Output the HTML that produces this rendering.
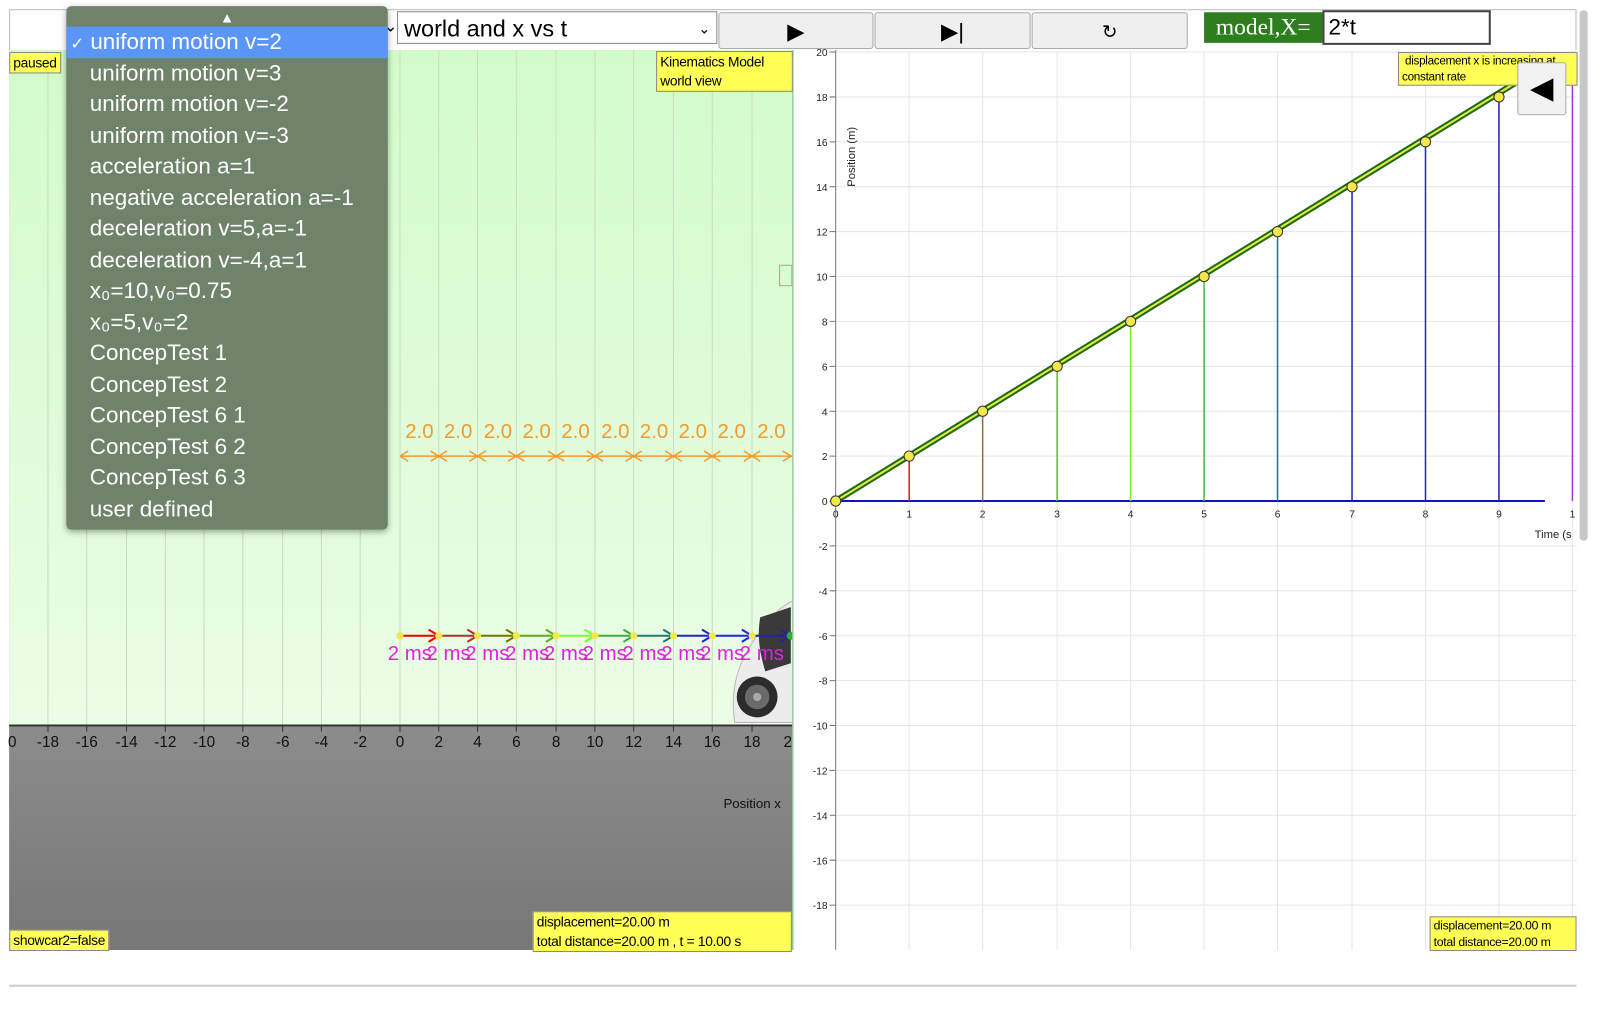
<!DOCTYPE html>
<html><head><meta charset="utf-8"><style>
body{margin:0;width:1600px;height:1000px;background:#fff;position:relative;overflow:hidden;font-family:"Liberation Sans",sans-serif}
#w{position:absolute;left:0;top:0;width:1568px;height:980px;transform:scale(1.0204);transform-origin:0 0}
.a{position:absolute}
.btn{position:absolute;top:12px;height:36px;background:#efefef;border:1px solid #aaa;border-radius:3px;box-sizing:border-box;text-align:center;font-size:22px;line-height:36px}
.y{position:absolute;background:#ffff55;border:1px solid #888;font-size:13.5px;letter-spacing:-0.3px;line-height:19px;padding:0 3px;color:#000;white-space:nowrap}
.menu{position:absolute;left:65px;top:6px;width:315px;height:513px;background:#6f836a;border-radius:5px;box-shadow:0 2px 6px rgba(0,0,0,.35)}
.menu div{height:30.5px;line-height:30px;font-size:22px;color:#fff;padding-left:23px}
</style></head><body><div id="w">
<div class="a" style="left:9px;top:9px;width:1536px;height:922px;border:1px solid #bbb;box-sizing:border-box"></div>
<div class="a" style="left:389px;top:11px;width:314px;height:32px;border:1px solid #888;font-size:23px;line-height:32px;padding-left:6px;box-sizing:border-box">world and x vs t<span style="position:absolute;right:6px;font-size:14px">&#8964;</span></div>
<div class="a" style="left:376px;top:16px;font-size:16px">&#8964;</div>
<div class="btn" style="left:704px;width:152px">&#9654;</div>
<div class="btn" style="left:857px;width:153px">&#9654;|</div>
<div class="btn" style="left:1011px;width:153px;font-size:18px">&#8635;</div>
<div class="a" style="left:1180px;top:12px;width:116px;height:30px;background:#2e7d1e;color:#fff;font-family:'Liberation Serif',serif;font-size:23px;line-height:30px;text-align:center">model,X=</div>
<div class="a" style="left:1296px;top:10px;width:165px;height:34px;border:2px solid #444;box-sizing:border-box;font-size:22px;line-height:30px;padding-left:4px">2*t</div>
<div class="a" style="left:1548px;top:10px;width:8px;height:520px;background:#c8c8c8;border-radius:4px"></div>
<svg class="a" style="left:0;top:0" width="1600" height="1000">
<defs><linearGradient id="gg" x1="0" y1="0" x2="0" y2="1"><stop offset="0" stop-color="#d2fbca"/><stop offset="1" stop-color="#ebfde6"/></linearGradient>
<linearGradient id="gr" x1="0" y1="0" x2="0" y2="1"><stop offset="0" stop-color="#8c8c8c"/><stop offset="1" stop-color="#777"/></linearGradient></defs>
<rect x="9" y="49" width="768" height="662" fill="url(#gg)"/>
<rect x="9" y="711" width="768" height="220" fill="url(#gr)"/>
<g stroke="#c9dcc4" stroke-width="1">
<path d="M47 49V711M85 49V711M124 49V711M162 49V711M200 49V711M238 49V711M277 49V711M315 49V711M353 49V711M392 49V711M430 49V711M468 49V711M506 49V711M545 49V711M583 49V711M621 49V711M660 49V711M698 49V711M737 49V711"/></g>
<line x1="9" y1="711" x2="777" y2="711" stroke="#333" stroke-width="2"/>
<g stroke="#333"><path d="M47 711v6M85 711v6M124 711v6M162 711v6M200 711v6M238 711v6M277 711v6M315 711v6M353 711v6M392 711v6M430 711v6M468 711v6M506 711v6M545 711v6M583 711v6M621 711v6M660 711v6M698 711v6M737 711v6"/></g>
<g font-size="15" text-anchor="middle" fill="#111">
<text x="12" y="732">0</text><text x="47" y="732">-18</text><text x="85" y="732">-16</text><text x="124" y="732">-14</text><text x="162" y="732">-12</text><text x="200" y="732">-10</text><text x="238" y="732">-8</text><text x="277" y="732">-6</text><text x="315" y="732">-4</text><text x="353" y="732">-2</text><text x="392" y="732">0</text><text x="430" y="732">2</text><text x="468" y="732">4</text><text x="506" y="732">6</text><text x="545" y="732">8</text><text x="583" y="732">10</text><text x="621" y="732">12</text><text x="660" y="732">14</text><text x="698" y="732">16</text><text x="737" y="732">18</text><text x="772" y="732">2</text></g>
<text x="709" y="792" font-size="13" fill="#111">Position x</text>
<g fill="#f39a2a" font-size="20" text-anchor="middle"><text x="411" y="429">2.0</text><text x="449" y="429">2.0</text><text x="488" y="429">2.0</text><text x="526" y="429">2.0</text><text x="564" y="429">2.0</text><text x="603" y="429">2.0</text><text x="641" y="429">2.0</text><text x="679" y="429">2.0</text><text x="717" y="429">2.0</text><text x="756" y="429">2.0</text></g>
<path d="M392 447H777M392 447l8-5M392 447l8 5M422 442l16 10M422 452l16-10M460 442l16 10M460 452l16-10M498 442l16 10M498 452l16-10M537 442l16 10M537 452l16-10M575 442l16 10M575 452l16-10M613 442l16 10M613 452l16-10M652 442l16 10M652 452l16-10M690 442l16 10M690 452l16-10M729 442l16 10M729 452l16-10M767 442l10 6M767 452l10-6" stroke="#f39a2a" stroke-width="1.5" fill="none"/>
<path d="M720 708c-6-40 8-70 30-95c8-12 18-20 27-24v119z" fill="#ececec" stroke="#bbb"/>
<path d="M745 605l30-10v55l-25 8c-6-20-8-35-5-53z" fill="#3a3a3a"/>
<circle cx="742" cy="683" r="20" fill="#2c2c2c"/><circle cx="742" cy="683" r="12" fill="#6a6a6a"/><circle cx="742" cy="683" r="4" fill="#aaa"/>
<g stroke-width="2" fill="none">
<path d="M392 623H430M420 617l10 6-10 6" stroke="#e00"/>
<path d="M430 623H468M458 617l10 6-10 6" stroke="#a33"/>
<path d="M468 623H506M496 617l10 6-10 6" stroke="#770"/>
<path d="M506 623H545M535 617l10 6-10 6" stroke="#6a2"/>
<path d="M545 623H583M573 617l10 6-10 6" stroke="#7f3"/>
<path d="M583 623H621M611 617l10 6-10 6" stroke="#4a4"/>
<path d="M621 623H660M650 617l10 6-10 6" stroke="#277"/>
<path d="M660 623H698M688 617l10 6-10 6" stroke="#22c"/>
<path d="M698 623H737M727 617l10 6-10 6" stroke="#22e"/>
<path d="M737 623H775M765 617l10 6-10 6" stroke="#22a"/></g>
<g fill="#f2e84a"><circle cx="392" cy="623" r="3.5"/><circle cx="430" cy="623" r="3.5"/><circle cx="468" cy="623" r="3.5"/><circle cx="506" cy="623" r="3.5"/><circle cx="545" cy="623" r="3.5"/><circle cx="583" cy="623" r="3.5"/><circle cx="621" cy="623" r="3.5"/><circle cx="660" cy="623" r="3.5"/><circle cx="698" cy="623" r="3.5"/><circle cx="737" cy="623" r="3.5"/></g>
<circle cx="775" cy="623" r="4" fill="#3a3"/>
<g fill="#e020e0" font-size="20"><text x="380" y="647">2 ms</text><text x="418" y="647">2 ms</text><text x="456" y="647">2 ms</text><text x="495" y="647">2 ms</text><text x="533" y="647">2 ms</text><text x="571" y="647">2 ms</text><text x="610" y="647">2 ms</text><text x="648" y="647">2 ms</text><text x="686" y="647">2 ms</text><text x="725" y="647">2 ms</text></g>
<rect x="764" y="260" width="12" height="20" fill="none" stroke="#e88" />
<rect x="777" y="49" width="768" height="882" fill="#fff"/>
<line x1="777" y1="49" x2="777" y2="931" stroke="#9c9" stroke-width="1.5"/>
<g stroke="#e6e6e6"><path d="M891 51V931M963 51V931M1036 51V931M1108 51V931M1180 51V931M1252 51V931M1325 51V931M1397 51V931M1469 51V931M1541 51V931"/>
<path d="M819 51H1545M819 95H1545M819 139H1545M819 183H1545M819 227H1545M819 271H1545M819 315H1545M819 359H1545M819 403H1545M819 447H1545M819 535H1545M819 579H1545M819 623H1545M819 667H1545M819 711H1545M819 755H1545M819 799H1545M819 843H1545M819 887H1545"/></g>
<line x1="819" y1="49" x2="819" y2="931" stroke="#777"/>
<g stroke="#777"><path d="M813 51h6M813 95h6M813 139h6M813 183h6M813 227h6M813 271h6M813 315h6M813 359h6M813 403h6M813 447h6M813 491h6M813 535h6M813 579h6M813 623h6M813 667h6M813 711h6M813 755h6M813 799h6M813 843h6M813 887h6"/></g>
<g font-size="10" text-anchor="end" fill="#222"><text x="811" y="55">20</text><text x="811" y="99">18</text><text x="811" y="143">16</text><text x="811" y="187">14</text><text x="811" y="231">12</text><text x="811" y="275">10</text><text x="811" y="319">8</text><text x="811" y="363">6</text><text x="811" y="407">4</text><text x="811" y="451">2</text><text x="811" y="495">0</text><text x="811" y="539">-2</text><text x="811" y="583">-4</text><text x="811" y="627">-6</text><text x="811" y="671">-8</text><text x="811" y="715">-10</text><text x="811" y="759">-12</text><text x="811" y="803">-14</text><text x="811" y="847">-16</text><text x="811" y="891">-18</text></g>
<g font-size="10" text-anchor="middle" fill="#222"><text x="819" y="507">0</text><text x="891" y="507">1</text><text x="963" y="507">2</text><text x="1036" y="507">3</text><text x="1108" y="507">4</text><text x="1180" y="507">5</text><text x="1252" y="507">6</text><text x="1325" y="507">7</text><text x="1397" y="507">8</text><text x="1469" y="507">9</text><text x="1541" y="507">1</text></g>
<text x="1504" y="527" font-size="11" fill="#222">Time (s</text>
<text transform="translate(838,183) rotate(-90)" font-size="11" fill="#222">Position (m)</text>
<line x1="819" y1="491" x2="1514" y2="491" stroke="#11c" stroke-width="2"/>
<g stroke-width="1.5"><line x1="891" y1="491" x2="891" y2="447" stroke="#c22"/><line x1="963" y1="491" x2="963" y2="403" stroke="#874"/><line x1="1036" y1="491" x2="1036" y2="359" stroke="#6b2"/><line x1="1108" y1="491" x2="1108" y2="315" stroke="#7e3"/><line x1="1180" y1="491" x2="1180" y2="271" stroke="#4b4"/><line x1="1252" y1="491" x2="1252" y2="227" stroke="#278"/><line x1="1325" y1="491" x2="1325" y2="183" stroke="#22c"/><line x1="1397" y1="491" x2="1397" y2="139" stroke="#22d"/><line x1="1469" y1="491" x2="1469" y2="95" stroke="#22a"/><line x1="1541" y1="51" x2="1541" y2="491" stroke="#a3c"/></g>
<line x1="819" y1="491" x2="1505" y2="69" stroke="#1b6b12" stroke-width="6"/>
<line x1="819" y1="491" x2="1505" y2="69" stroke="#e8e840" stroke-width="2"/>
<g fill="#f2e84a" stroke="#333" stroke-width="1"><circle cx="819" cy="491" r="5"/><circle cx="891" cy="447" r="5"/><circle cx="963" cy="403" r="5"/><circle cx="1036" cy="359" r="5"/><circle cx="1108" cy="315" r="5"/><circle cx="1180" cy="271" r="5"/><circle cx="1252" cy="227" r="5"/><circle cx="1325" cy="183" r="5"/><circle cx="1397" cy="139" r="5"/><circle cx="1469" cy="95" r="5"/></g>
</svg>
<div class="y" style="left:9px;top:51px">paused</div>
<div class="y" style="left:643px;top:50px;width:126px;white-space:normal">Kinematics Model world view</div>
<div class="y" style="left:1370px;top:51px;width:168px;height:31px;font-size:11.5px;line-height:16px;white-space:normal;overflow:hidden">&nbsp;displacement x is increasing at constant rate</div>
<div class="a" style="left:1487px;top:61px;width:46px;height:50px;background:#f2f2f2;border:1px solid #aaa;border-radius:3px;font-size:30px;line-height:50px;text-align:center">&#9664;</div>
<div class="y" style="left:9px;top:911px">showcar2=false</div>
<div class="y" style="left:522px;top:893px;width:246px">displacement=20.00 m<br>total distance=20.00 m , t = 10.00 s</div>
<div class="y" style="left:1401px;top:898px;font-size:12px;line-height:16px;width:136px">displacement=20.00 m<br>total distance=20.00 m</div>
<div class="a" style="left:9px;top:965px;width:1536px;height:2px;background:#ccc"></div>
<div class="menu">
<div style="height:20px;line-height:22px;padding:0;text-align:center;font-size:14px">&#9650;</div>
<div style="background:#5b95f7;padding-left:4px"><span style="font-size:16px">&#10003;</span> uniform motion v=2</div>
<div>uniform motion v=3</div><div>uniform motion v=-2</div><div>uniform motion v=-3</div><div>acceleration a=1</div><div>negative acceleration a=-1</div><div>deceleration v=5,a=-1</div><div>deceleration v=-4,a=1</div><div>x₀=10,v₀=0.75</div><div>x₀=5,v₀=2</div><div>ConcepTest 1</div><div>ConcepTest 2</div><div>ConcepTest 6 1</div><div>ConcepTest 6 2</div><div>ConcepTest 6 3</div><div>user defined</div>
</div>
</div></body></html>
